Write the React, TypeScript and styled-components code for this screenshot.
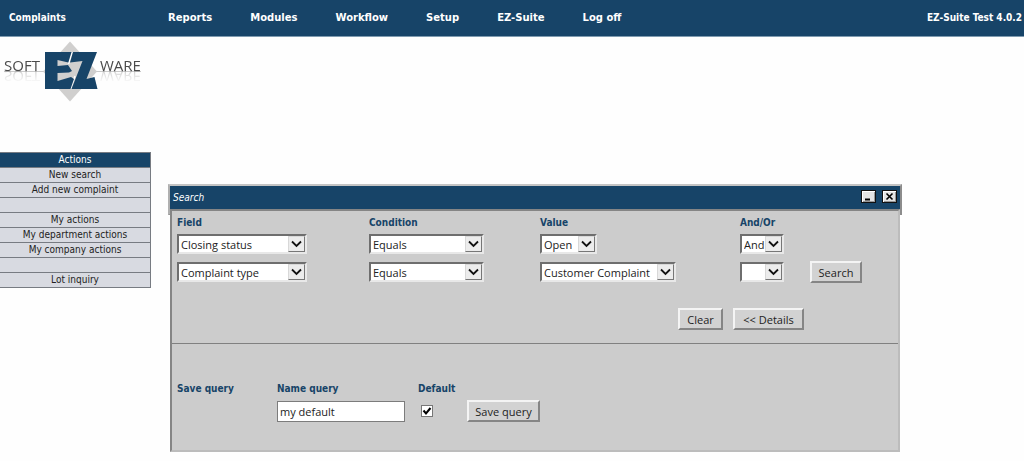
import React from "react";
import styled, { createGlobalStyle } from "styled-components";

const navy = "#174468";
const ui = '"Open Sans", "Noto Sans", sans-serif';
const tahoma = '"DejaVu Sans Condensed", "DejaVu Sans", sans-serif';

const Global = createGlobalStyle`
  *, *::before, *::after { box-sizing: border-box; }
  body { margin: 0; background: #fefefe; color: #222; font: 11px/15px ${ui}; }
`;

const TopBar = styled.header`
  display: flex;
  align-items: center;
  height: 37px;
  padding: 0 2px 1px 9px;
  background: ${navy};
  border-bottom: 1px solid #7f9bb0;
  color: #fff;
  font: bold 10px/14px ${tahoma};
`;
const Section = styled.span`
  width: 159px;
  flex: none;
`;
const Menu = styled.nav`
  display: flex;
  flex: 1;
  gap: 38px;
  font-family: "DejaVu Sans", sans-serif;
`;
const MenuLink = styled.a`
  color: inherit;
  text-decoration: none;
  white-space: nowrap;
`;

const Brand = styled.div`
  height: 115px;
  padding: 4px 0 0 4px;
`;
const Wordmark = styled.div`
  display: flex;
  width: 137px;
  height: 61px;
  background: linear-gradient(#c9c9c9, #c9c9c9) 0 30px / 100% 1px no-repeat;
`;
const Word = styled.span`
  height: 12px;
  margin-top: 18px;
  color: #4a4a4a;
  font: 15px/12px ${ui};
  -webkit-box-reflect: below 0 linear-gradient(transparent, rgba(0, 0, 0, 0.25));
`;
const Emblem = styled.svg`
  flex: none;
  margin: 0 2px 0 3px;
`;

const Columns = styled.div`
  display: flex;
  align-items: flex-start;
`;
const Sidebar = styled.nav`
  width: 151px;
  flex: none;
  border: 1px solid #777b82;
  border-left: 0;
  background: #d8dae1;
  font: 10px/14px ${tahoma};
  text-align: center;
`;
const SideTitle = styled.h2`
  margin: 0;
  background: ${navy};
  color: #fff;
  font: inherit;
`;
const SideList = styled.ul`
  margin: 0;
  padding: 0;
  list-style: none;
`;
const SideItem = styled.li`
  height: 15px;
  border-top: 1px solid #777b82;
`;
const SideLink = styled.a`
  color: #222;
  text-decoration: none;
`;

const Main = styled.main`
  flex: 1;
  min-width: 0;
  padding: 32px 122px 10px 17px;
`;
const Frame = styled.div`
  height: 31px;
  border: 2px solid;
  border-color: #c4c4c4 #8c8c8c #8c8c8c #b0b0b0;
  border-bottom-width: 1px;
  background: #ccc;
`;
const TitleBar = styled.div`
  display: flex;
  align-items: center;
  gap: 6px;
  height: 23px;
  padding: 0 3px;
  background: ${navy};
  color: #fff;
`;
const Title = styled.h1`
  flex: 1;
  margin: 0;
  font: italic 10px/14px ${tahoma};
`;
const WinButton = styled.button`
  display: flex;
  width: 15px;
  height: 13px;
  margin-bottom: 3px;
  padding: 0;
  border: 1px solid #111;
  background: #e4e4e4;
  box-shadow: inset 1px 1px #fff, inset -1px -1px #999;
`;

const Body = styled.div`
  position: relative;
  margin: -6px 2px 0;
  border: 2px solid;
  border-color: #858585 #bcbcbc #bcbcbc #858585;
  background: #ccc;
`;
const QueryForm = styled.form`
  height: 133px;
  padding: 4px 5px 0;
  border-bottom: 1px solid #808080;
`;
const Grid = styled.div`
  display: grid;
  grid-template-columns: 192px 171px 200px 70px auto;
  align-items: center;
  grid-template-rows: 15px 28px 28px;
`;
const Caption = styled.span`
  color: ${navy};
  font: bold 10px/15px ${tahoma};
`;
const Pick = styled.span<{ $w: number }>`
  position: relative;
  display: block;
  width: ${(p) => p.$w}px;
  height: 20px;
`;
const Select = styled.select`
  appearance: none;
  display: block;
  width: 100%;
  height: 20px;
  padding: 0 16px 0 2px;
  border: 2px solid;
  border-color: #6e6e6e #e8e8e8 #e8e8e8 #6e6e6e;
  border-radius: 0;
  background: #fff;
  color: #222;
  font: 11px/15px ${ui};
`;
const Arrow = styled.svg`
  position: absolute;
  top: 2px;
  right: 2px;
  border: 1px solid;
  border-color: #d8d8d8 #777 #777 #d8d8d8;
  background: #ececec;
  pointer-events: none;
`;
const Button = styled.button<{ $w: number }>`
  width: ${(p) => p.$w}px;
  height: 22px;
  padding: 0;
  border: 2px solid;
  border-color: #f4f4f4 #858585 #858585 #f4f4f4;
  background: #d2d2d2;
  color: #222;
  font: 11px/15px ${ui};
`;
const Actions = styled.div`
  display: flex;
  gap: 10px;
  margin-top: 22px;
  padding-left: 501px;
`;
const SaveForm = styled.form`
  display: grid;
  grid-template-columns: 100px 141px 49px auto;
  grid-template-rows: 15px 22px;
  row-gap: 4px;
  align-items: center;
  height: 106px;
  padding: 37px 5px 0;
  align-content: start;
`;
const TextBox = styled.input`
  width: 128px;
  height: 21px;
  padding: 0 2px;
  border: 1px solid #7c7c7c;
  background: #fff;
  color: #222;
  font: 11px/15px ${ui};
`;
const CheckWrap = styled.span`
  position: relative;
  display: block;
  width: 12px;
  height: 12px;
  margin-left: 3px;
`;
const Check = styled.input`
  appearance: none;
  display: block;
  width: 12px;
  height: 12px;
  margin: 0;
  border: 1px solid #777;
  background: #fff;
  &:not(:checked) + svg { display: none; }
`;
const Tick = styled.svg`
  position: absolute;
  inset: 0;
  pointer-events: none;
`;

function Logo() {
  return (
    <Wordmark>
      <Word>SOFT</Word>
      <Emblem width="55" height="61" viewBox="44 41 55 61" role="img" aria-label="EZ">
        <path d="M71 41.500L98 71.500L71 101.500L44 71.500Z" fill="#d0cfce" />
        <path d="M73.300 52L69.500 64M76 76L71.500 89" stroke="#fff" strokeWidth="1.500" />
        <path d="M46 52H72.500L69.300 62.500L58.500 60V66L69 65L73 71L70 72.500L58.500 73V81L72 77L75 79L71.500 89H46Z" fill={navy} />
        <path d="M74 52H98L87.500 79L95.500 77L98.500 89H72.500L83.500 61L71 62.500Z" fill={navy} />
      </Emblem>
      <Word>WARE</Word>
    </Wordmark>
  );
}

function Dropdown({ label, width, options }: { label: string; width: number; options: string[] }) {
  return (
    <Pick $w={width}>
      <Select aria-label={label}>
        {options.map((o) => (
          <option key={o}>{o}</option>
        ))}
      </Select>
      <Arrow width="17" height="16" viewBox="0 0 15 14" aria-hidden="true">
        <path d="M3 4.500L7.500 9L12 4.500" fill="none" stroke="#111" strokeWidth="1.800" />
      </Arrow>
    </Pick>
  );
}

const menu = ["Reports", "Modules", "Workflow", "Setup", "EZ-Suite", "Log off"];
const side = [
  "New search",
  "Add new complaint",
  "",
  "My actions",
  "My department actions",
  "My company actions",
  "",
  "Lot inquiry",
];

export default function App() {
  return (
    <>
      <Global />
      <TopBar>
        <Section>Complaints</Section>
        <Menu>
          {menu.map((m) => (
            <MenuLink href="#" key={m}>{m}</MenuLink>
          ))}
        </Menu>
        <span>EZ-Suite Test 4.0.2</span>
      </TopBar>
      <Brand>
        <Logo />
      </Brand>
      <Columns>
        <Sidebar>
          <SideTitle>Actions</SideTitle>
          <SideList>
            {side.map((s, i) => (
              <SideItem key={i}>{s && <SideLink href="#">{s}</SideLink>}</SideItem>
            ))}
          </SideList>
        </Sidebar>
        <Main>
          <Frame>
            <TitleBar>
              <Title>Search</Title>
              <WinButton type="button" aria-label="Minimize">
                <svg width="13" height="11" viewBox="0 0 13 11">
                  <path d="M3 8.500H8" stroke="#000" strokeWidth="2" />
                </svg>
              </WinButton>
              <WinButton type="button" aria-label="Close">
                <svg width="13" height="11" viewBox="0 0 13 11">
                  <path d="M3.500 2.500L9.500 8.500M9.500 2.500L3.500 8.500" stroke="#000" strokeWidth="1.600" />
                </svg>
              </WinButton>
            </TitleBar>
          </Frame>
          <Body>
            <QueryForm onSubmit={(e) => e.preventDefault()}>
              <Grid>
                <Caption>Field</Caption>
                <Caption>Condition</Caption>
                <Caption>Value</Caption>
                <Caption>And/Or</Caption>
                <span />
                <Dropdown label="Field 1" width={130} options={["Closing status", "Complaint type"]} />
                <Dropdown label="Condition 1" width={115} options={["Equals"]} />
                <Dropdown label="Value 1" width={57} options={["Open"]} />
                <Dropdown label="And/Or 1" width={44} options={["And", "Or"]} />
                <span />
                <Dropdown label="Field 2" width={130} options={["Complaint type", "Closing status"]} />
                <Dropdown label="Condition 2" width={115} options={["Equals"]} />
                <Dropdown label="Value 2" width={136} options={["Customer Complaint"]} />
                <Dropdown label="And/Or 2" width={44} options={["", "And", "Or"]} />
                <Button $w={52}>Search</Button>
              </Grid>
              <Actions>
                <Button type="reset" $w={45}>Clear</Button>
                <Button type="button" $w={71}>&lt;&lt; Details</Button>
              </Actions>
            </QueryForm>
            <SaveForm onSubmit={(e) => e.preventDefault()}>
              <Caption>Save query</Caption>
              <Caption as="label" htmlFor="name">Name query</Caption>
              <Caption as="label" htmlFor="default">Default</Caption>
              <span />
              <span />
              <TextBox id="name" defaultValue="my default" />
              <CheckWrap>
                <Check id="default" type="checkbox" defaultChecked />
                <Tick width="12" height="12" viewBox="0 0 12 12" aria-hidden="true">
                  <path d="M2.500 5.500L5 8.500L9.500 3" fill="none" stroke="#000" strokeWidth="2" />
                </Tick>
              </CheckWrap>
              <Button $w={73}>Save query</Button>
            </SaveForm>
          </Body>
        </Main>
      </Columns>
    </>
  );
}
